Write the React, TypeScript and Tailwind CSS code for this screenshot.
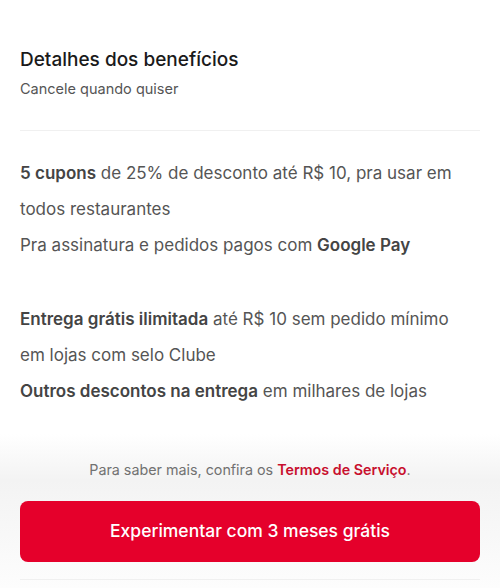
const font = { fontFamily: "Inter, 'Noto Sans', sans-serif" };

export default function App() {
  return (
    <div className="flex h-[588px] w-[500px] flex-col bg-white" style={font}>
      <div className="flex-1 px-5 pt-[47px]">
        <h1 className="text-[19px] font-medium leading-[26px] text-[#1a1a1a]">
          Detalhes dos benefícios
        </h1>
        <p className="mt-[6px] text-[14.5px] leading-[20px] text-[#555]">Cancele quando quiser</p>
        <div className="mt-[31px] h-px bg-[#f0f0f0]" />

        <div className="mt-[24px] max-w-[440px] text-[17px] leading-[36px] text-[#555]">
          <p>
            <span className="font-semibold text-[#444]">5 cupons</span> de 25% de desconto até R$ 10, pra usar em
            todos restaurantes
          </p>
          <p>
            Pra assinatura e pedidos pagos com <span className="font-semibold text-[#444]">Google Pay</span>
          </p>
        </div>

        <div className="mt-[38px] max-w-[440px] text-[17px] leading-[36px] text-[#555]">
          <p>
            <span className="font-semibold text-[#444]">Entrega grátis ilimitada</span> até R$ 10 sem pedido mínimo em
            lojas com selo Clube
          </p>
          <p>
            <span className="font-semibold text-[#444]">Outros descontos na entrega</span> em milhares de lojas
          </p>
        </div>
      </div>

      <div className="bg-gradient-to-b from-[#ffffff] via-[#f3f3f3] via-30% to-[#fdfdfd] px-5 pt-[26px]">
        <p className="text-center text-[14.3px] leading-[20px] text-[#717171]">
          Para saber mais, confira os <span className="font-semibold text-[#c8102e]">Termos de Serviço</span>.
        </p>
        <button className="mt-[21px] flex h-[61px] w-full items-center justify-center rounded-[8px] bg-[#e5002b] text-[17.5px] font-medium text-white">
          Experimentar com 3 meses grátis
        </button>
        <div className="mt-[17px] h-[9px] border-t border-[#f0f0f0]" />
      </div>
    </div>
  );
}
